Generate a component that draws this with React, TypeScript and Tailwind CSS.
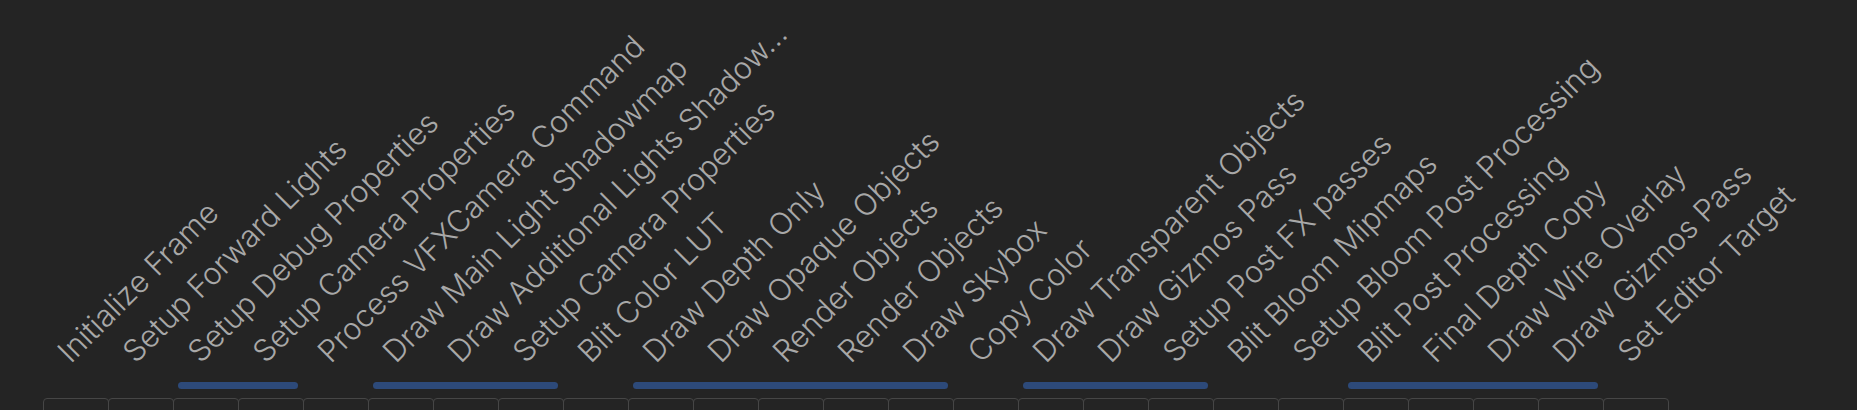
import React from 'react';

const passes = [
  'Initialize Frame',
  'Setup Forward Lights',
  'Setup Debug Properties',
  'Setup Camera Properties',
  'Process VFXCamera Command',
  'Draw Main Light Shadowmap',
  'Draw Additional Lights Shadow...',
  'Setup Camera Properties',
  'Blit Color LUT',
  'Draw Depth Only',
  'Draw Opaque Objects',
  'Render Objects',
  'Render Objects',
  'Draw Skybox',
  'Copy Color',
  'Draw Transparent Objects',
  'Draw Gizmos Pass',
  'Setup Post FX passes',
  'Blit Bloom Mipmaps',
  'Setup Bloom Post Processing',
  'Blit Post Processing',
  'Final Depth Copy',
  'Draw Wire Overlay',
  'Draw Gizmos Pass',
  'Set Editor Target',
];

// resource lifetime bars, by column span
const bars = [
  'col-start-3 col-span-2',
  'col-start-6 col-span-3',
  'col-start-10 col-span-5',
  'col-start-16 col-span-3',
  'col-start-21 col-span-4',
];

export default function App() {
  return (
    <div className="h-[410px] w-full overflow-hidden bg-[#242424] font-['Inter','Noto_Sans',sans-serif]">
      {/* pass names */}
      <div className="flex pl-[43px]">
        {passes.map((name, i) => (
          <div key={i} className="flex h-[367px] w-[65px] shrink-0 items-end">
            <span className="ml-[31px] origin-bottom-left -rotate-45 whitespace-nowrap text-[30.5px] font-light leading-none text-[#a8a8a8]">
              {name}
            </span>
          </div>
        ))}
      </div>

      {/* bars */}
      <div className="mt-[15px] grid grid-cols-[repeat(25,65px)] pl-[43px]">
        {bars.map((c, i) => (
          <div key={i} className={`${c} mx-[5px] h-[7px] rounded-full bg-[#2d4a7a]`} />
        ))}
      </div>

      {/* pass cells */}
      <div className="mt-[9px] flex pl-[43px]">
        {passes.map((_, i) => (
          <div
            key={i}
            className={`h-[30px] w-[66px] shrink-0 rounded-[4px] border border-[#464646] ${i > 0 ? '-ml-px' : ''}`}
          />
        ))}
      </div>
    </div>
  );
}
